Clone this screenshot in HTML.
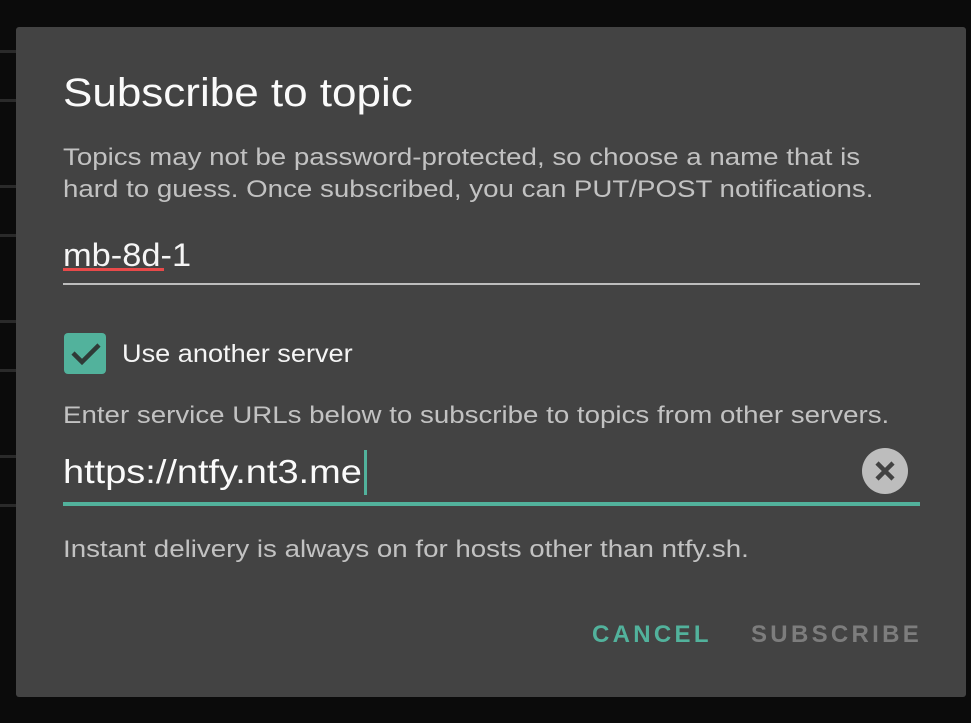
<!DOCTYPE html>
<html><head><style>
html,body{margin:0;padding:0;background:#0b0b0b;width:971px;height:723px;overflow:hidden;font-family:"Liberation Sans",sans-serif;}
.bgicon{position:absolute;left:-8px;width:22px;height:46px;border:3px solid #2a2a2a;border-radius:4px;}
.dlg{position:absolute;left:16px;top:27px;width:950px;height:670px;background:#434343;border-radius:3px;}
.t{position:absolute;left:63px;white-space:nowrap;transform-origin:0 0;}
</style></head><body>
<div class="bgicon" style="top:50px"></div>
<div class="bgicon" style="top:185px"></div>
<div class="bgicon" style="top:320px"></div>
<div class="bgicon" style="top:455px"></div>
<div class="dlg"></div>
<div class="t" style="top:71px;font-size:40px;color:#fafafa;transform:scaleX(1.10)">Subscribe to topic</div>
<div class="t" style="top:142px;font-size:24.5px;color:#c2c2c2;line-height:32px;transform:scaleX(1.13)">Topics may not be password-protected, so choose a name that is<br>hard to guess. Once subscribed, you can PUT/POST notifications.</div>
<div class="t" style="top:237px;font-size:32px;color:#f5f5f5;transform:scaleX(1.075)">mb-8d-1</div>
<div style="position:absolute;left:63px;top:268px;width:101px;height:3px;background:#e84a4a;"></div>
<div style="position:absolute;left:63px;top:283px;width:857px;height:2px;background:#bdbdbd;"></div>
<div style="position:absolute;left:64px;top:333px;width:42px;height:41px;background:#52b29c;border-radius:4px;"></div>
<svg style="position:absolute;left:64px;top:333px" width="42" height="41"><path d="M9 20 L18 29 L35 12" stroke="#2f3a37" stroke-width="4.5" fill="none"/></svg>
<div class="t" style="left:122px;top:340px;font-size:25px;color:#f5f5f5;transform:scaleX(1.085)">Use another server</div>
<div class="t" style="top:402px;font-size:24.5px;color:#c2c2c2;transform:scaleX(1.13)">Enter service URLs below to subscribe to topics from other servers.</div>
<div class="t" style="top:453px;font-size:33px;color:#fafafa;transform:scaleX(1.15)">https://ntfy.nt3.me</div>
<div style="position:absolute;left:364px;top:450px;width:3px;height:45px;background:#52b29c;"></div>
<div style="position:absolute;left:862px;top:448px;width:46px;height:46px;border-radius:50%;background:#bdbdbd;"></div>
<svg style="position:absolute;left:862px;top:448px" width="46" height="46"><path d="M15 15 L31 31 M31 15 L15 31" stroke="#424242" stroke-width="4.5"/></svg>
<div style="position:absolute;left:63px;top:502px;width:857px;height:4px;background:#52b29c;"></div>
<div class="t" style="top:536px;font-size:24.5px;color:#c2c2c2;transform:scaleX(1.13)">Instant delivery is always on for hosts other than ntfy.sh.</div>
<div class="t" style="left:592px;top:621px;font-size:24px;color:#52b29c;letter-spacing:3.3px;font-weight:bold;">CANCEL</div>
<div class="t" style="left:751px;top:621px;font-size:24px;color:#7d7d7d;letter-spacing:3.3px;font-weight:bold;">SUBSCRIBE</div>
</body></html>
